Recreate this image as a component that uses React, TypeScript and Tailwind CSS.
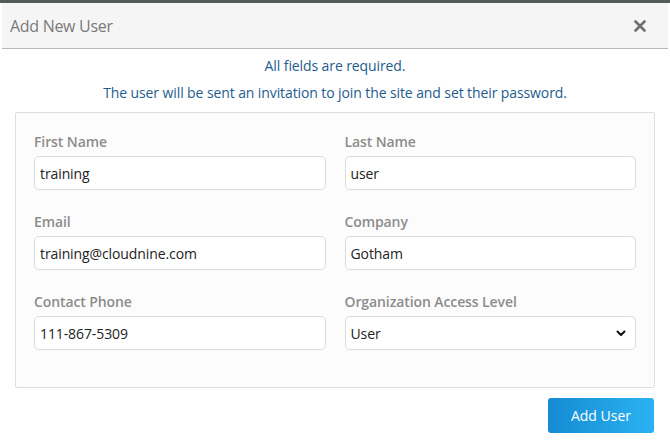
import React from 'react';

const fieldFont = { fontFamily: '"Open Sans", "Liberation Sans", sans-serif' };

interface FieldProps {
  label: string;
  value: string;
  select?: boolean;
}

const Field: React.FC<FieldProps> = ({ label, value, select }) => (
  <div className="flex flex-col">
    <label className="h-5 text-[14px] leading-5 font-semibold text-[#8c8c8c] tracking-[-0.1px]">{label}</label>
    <div className="mt-[4px] h-[34px] rounded-[5px] border border-[#dcdcdc] bg-white flex items-center justify-between pl-[5px] pr-[9px]">
      <span className="text-[14px] text-[#222] tracking-[-0.1px]">{value}</span>
      {select && (
        <svg width="10" height="7" viewBox="0 0 10 7">
          <path d="M1.5 1.5 L5 5 L8.5 1.5" fill="none" stroke="#111" strokeWidth="2" strokeLinecap="round" strokeLinejoin="round" />
        </svg>
      )}
    </div>
  </div>
);

export default function App() {
  return (
    <div className="w-[670px] h-[447px] bg-white overflow-hidden" style={fieldFont}>
      <div className="h-[3px] bg-[#555a5c]" />
      {/* Header */}
      <div className="mx-[2px] h-[46px] bg-[#f5f5f5] border-b border-[#b8b8b8] flex items-center justify-between pl-[8px] pr-[22px]">
        <h2 className="text-[16px] font-medium text-[#7a7a7a] tracking-[-0.3px]">Add New User</h2>
        <svg width="12" height="12" viewBox="0 0 12 12">
          <path d="M1.5 1.5 L10.5 10.5 M10.5 1.5 L1.5 10.5" stroke="#6e6e6e" strokeWidth="2.6" strokeLinecap="round" />
        </svg>
      </div>

      {/* Notices */}
      <div className="flex flex-col items-center pt-[7px] text-[14px] text-[#245c8e] font-medium tracking-[-0.1px]">
        <p className="leading-5">All fields are required.</p>
        <p className="leading-5 mt-[7px]">The user will be sent an invitation to join the site and set their password.</p>
      </div>

      {/* Form panel */}
      <div className="mx-[15px] mt-[9px] h-[276px] border border-[#dedede] rounded-[2px] bg-[#fcfcfc] px-[18px] pt-[19px]">
        <div className="grid grid-cols-2 gap-x-[19px] gap-y-[22px]">
          <Field label="First Name" value="training" />
          <Field label="Last Name" value="user" />
          <Field label="Email" value="training@cloudnine.com" />
          <Field label="Company" value="Gotham" />
          <Field label="Contact Phone" value="111-867-5309" />
          <Field label="Organization Access Level" value="User" select />
        </div>
      </div>

      {/* Footer */}
      <div className="flex justify-end pr-[16px] pt-[10px]">
        <button className="w-[106px] h-[35px] rounded-[3px] bg-gradient-to-r from-[#168bd3] to-[#2ab2f2] text-white text-[14px] font-medium">
          Add User
        </button>
      </div>
    </div>
  );
}
